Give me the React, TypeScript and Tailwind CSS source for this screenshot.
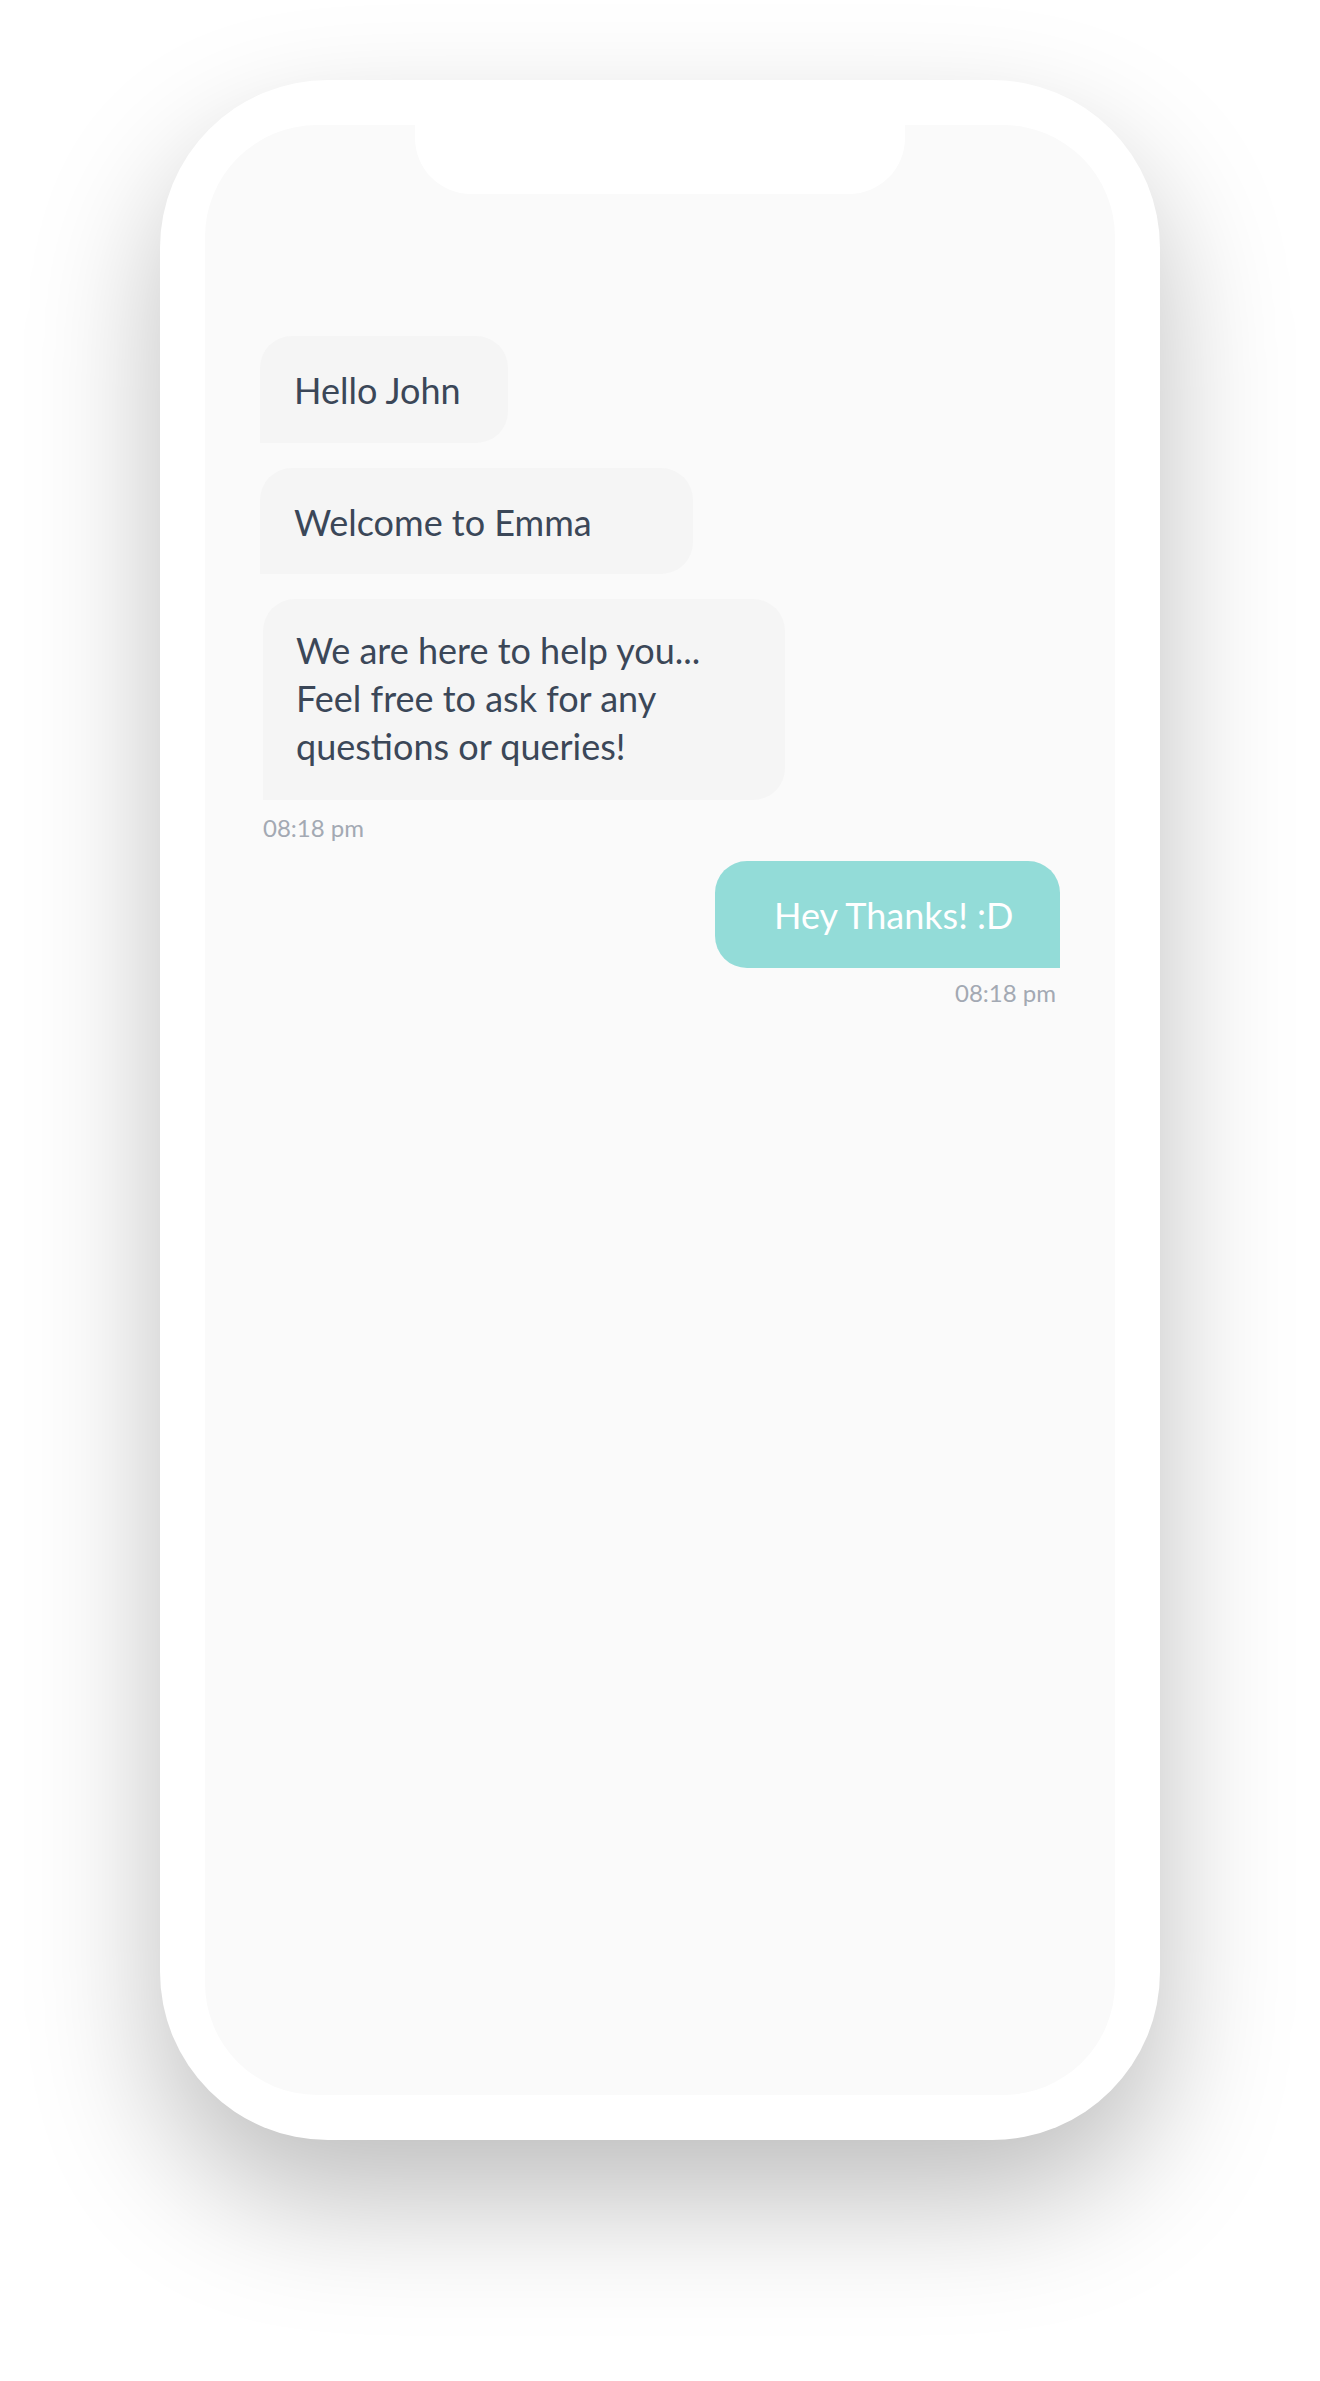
import React from 'react'

const incoming = [
  { text: 'Hello John', width: 'w-[248px]', box: 'ml-0 pt-[30px] pb-[29px]' },
  { text: 'Welcome to Emma', width: 'w-[433px]', box: 'ml-0 pt-[30px] pb-[28px] mt-[25px]' },
]

export default function App() {
  return (
    <div className="min-h-[2381px] w-full bg-white pt-[80px] font-['Lato',sans-serif]">
      <div className="mx-auto h-[2060px] w-[1000px] rounded-[168px] bg-white p-[45px] shadow-[0_60px_130px_rgba(0,0,0,0.26)]">
        <div className="relative h-full overflow-hidden rounded-[112px] bg-[#fafafa]">
          {/* notch */}
          <div className="absolute left-1/2 top-0 h-[69px] w-[490px] -translate-x-1/2 rounded-b-[56px] bg-white" />

          <div className="flex flex-col px-[55px] pt-[211px]">
            {incoming.map((m) => (
              <div
                key={m.text}
                className={`${m.width} ${m.box} rounded-[32px] rounded-bl-none bg-[#f5f5f5] pl-[34px] text-[36px] leading-[48px] text-[#3b4758]`}
              >
                {m.text}
              </div>
            ))}

            <div className="ml-[3px] mt-[25px] w-[522px] rounded-[32px] rounded-bl-none bg-[#f5f5f5] pb-[30px] pl-[33px] pt-[27px] text-[36px] leading-[48px] text-[#3b4758]">
              We are here to help you...
              <br />
              Feel free to ask for any
              <br />
              questions or queries!
            </div>
            <div className="ml-[3px] mt-[13px] text-[24px] leading-[29px] text-[#a3a9b3]">08:18 pm</div>

            <div className="mt-[19px] flex flex-col items-end">
              <div className="w-[345px] rounded-[32px] rounded-br-none bg-[#93dcd8] pb-[29px] pl-[59px] pt-[30px] text-[36px] leading-[48px] text-white">
                Hey Thanks! :D
              </div>
              <div className="mr-[4px] mt-[10px] text-[24px] leading-[29px] text-[#a3a9b3]">08:18 pm</div>
            </div>
          </div>
        </div>
      </div>
    </div>
  )
}
